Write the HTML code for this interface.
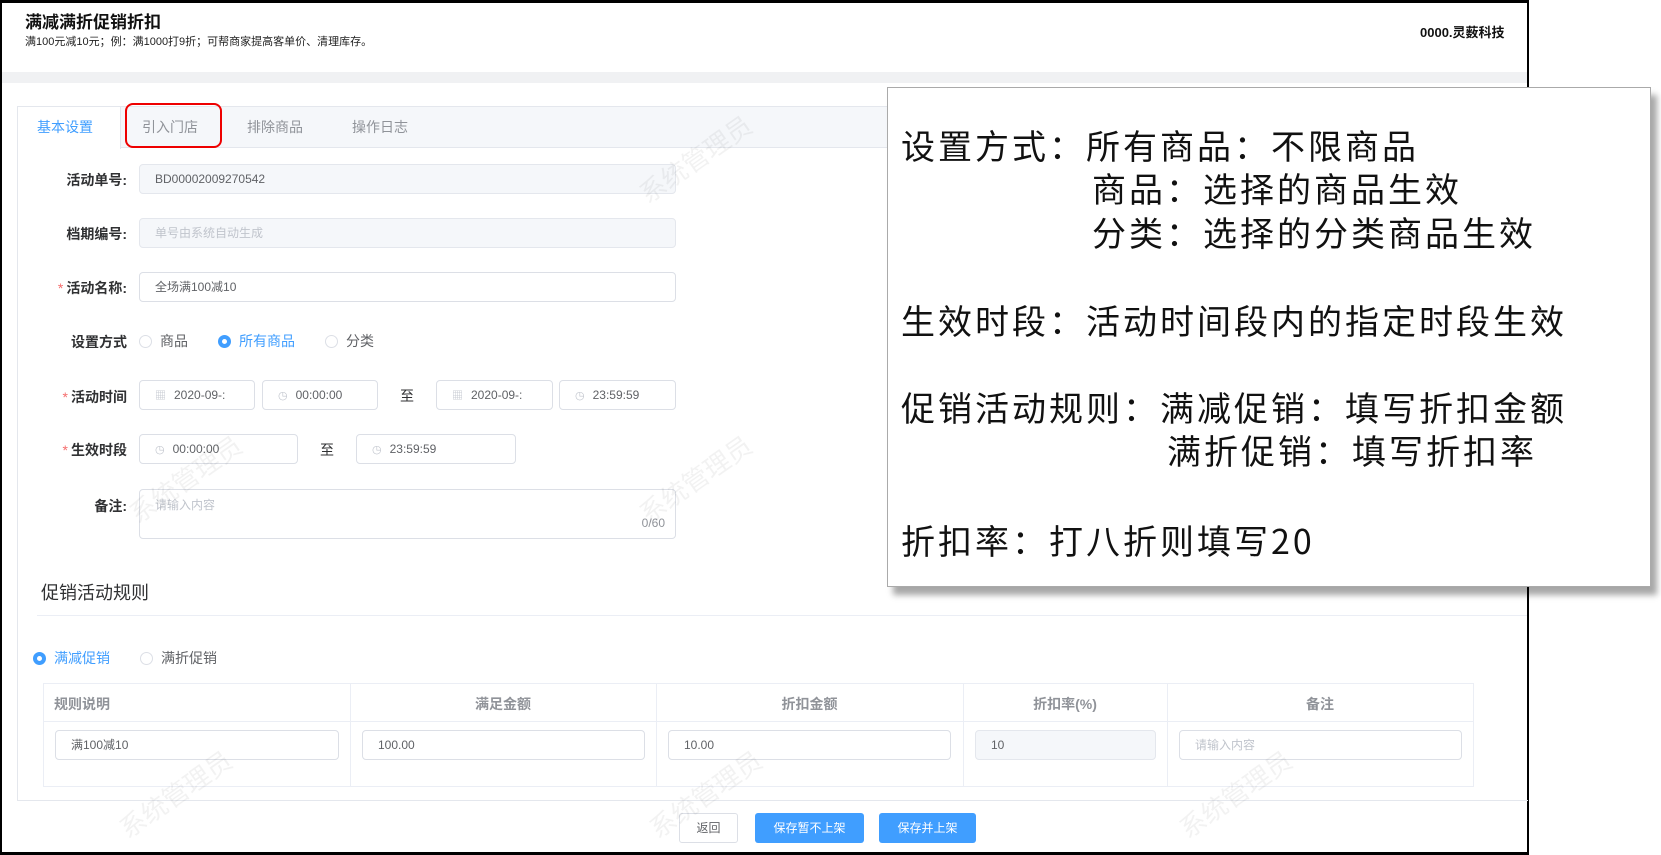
<!DOCTYPE html>
<html><head><meta charset="utf-8"><style>
*{box-sizing:border-box;margin:0;padding:0}
body{width:1661px;height:855px;background:#fff;position:relative;overflow:hidden;font-family:"Liberation Sans","Noto Sans CJK SC",sans-serif;color:#606266}
.a{position:absolute;white-space:nowrap}
.frame{position:absolute;left:0;top:0;width:1529px;height:855px;border:2px solid #000;border-top-width:3px;border-bottom-width:3px;background:#fff}
.inp{position:absolute;height:30px;border:1px solid #dcdfe6;border-radius:4px;background:#fff;font-size:12px;line-height:28px;padding-left:15px;color:#606266}
.dis{background:#f5f7fa;border-color:#e4e7ed;color:#606266}
.ph{color:#c0c4cc}
.lbl{position:absolute;font-size:14px;font-weight:bold;color:#303133;text-align:right;width:110px;left:17px}
.req{color:#f56c6c;margin-right:3px;font-weight:normal}
.radio{display:inline-block;width:13px;height:13px;border:1px solid #dcdfe6;border-radius:50%;vertical-align:-2px;margin-right:8px;background:#fff}
.radio.on{border:4px solid #409eff}
.ov{font-family:"Noto Sans CJK SC",sans-serif;font-size:34px;color:#111;position:absolute;white-space:nowrap;letter-spacing:3px;line-height:40px}
.wm{position:absolute;font-size:26px;color:rgba(0,0,0,0.05);transform:rotate(-35deg);white-space:nowrap}
.ic{color:#c0c4cc;font-size:11px;margin-right:8px}
</style></head><body>
<div class="frame"></div>
<div class="a" style="left:25px;top:8px;font-size:17px;font-weight:bold;color:#111">满减满折促销折扣</div>
<div class="a" style="left:25px;top:33px;font-size:11px;color:#222">满100元减10元；例：满1000打9折；可帮商家提高客单价、清理库存。</div>
<div class="a" style="left:1420px;top:22px;font-size:13px;font-weight:bold;color:#111">0000.灵薮科技</div>
<div class="a" style="left:2px;top:72px;width:1525px;height:11px;background:#f0f1f3"></div>

<div class="a" style="left:17px;top:106px;width:1511px;height:695px;border:1px solid #e4e7ed;border-right:none"></div>
<div class="a" style="left:18px;top:107px;width:1509px;height:41px;background:#f5f7fa;border-bottom:1px solid #e4e7ed"></div>
<div class="a" style="left:18px;top:107px;width:103px;height:42px;background:#fff;border-right:1px solid #e4e7ed"></div>
<div class="a" style="left:37px;top:117px;font-size:14px;color:#409eff">基本设置</div>
<div class="a" style="left:142px;top:117px;font-size:14px;color:#909399">引入门店</div>
<div class="a" style="left:247px;top:117px;font-size:14px;color:#909399">排除商品</div>
<div class="a" style="left:352px;top:117px;font-size:14px;color:#909399">操作日志</div>
<div class="a" style="left:125px;top:103px;width:97px;height:45px;border:2px solid #e00;border-radius:8px"></div>

<div class="lbl" style="top:170px">活动单号:</div>
<div class="inp dis" style="left:139px;top:164px;width:537px">BD00002009270542</div>
<div class="lbl" style="top:224px">档期编号:</div>
<div class="inp dis ph" style="left:139px;top:218px;width:537px">单号由系统自动生成</div>
<div class="lbl" style="top:278px"><span class="req">*</span>活动名称:</div>
<div class="inp" style="left:139px;top:272px;width:537px">全场满100减10</div>
<div class="lbl" style="top:332px">设置方式</div>
<div class="a" style="left:139px;top:331px;font-size:14px"><span class="radio"></span>商品<span style="display:inline-block;width:30px"></span><span class="radio on"></span><span style="color:#409eff">所有商品</span><span style="display:inline-block;width:30px"></span><span class="radio"></span>分类</div>
<div class="lbl" style="top:387px"><span class="req">*</span>活动时间</div>
<div class="inp" style="left:139px;top:380px;width:116px"><span class="ic">▦</span>2020-09-:</div>
<div class="inp" style="left:262px;top:380px;width:116px"><span class="ic">◷</span>00:00:00</div>
<div class="a" style="left:400px;top:386px;font-size:14px;color:#303133">至</div>
<div class="inp" style="left:436px;top:380px;width:117px"><span class="ic">▦</span>2020-09-:</div>
<div class="inp" style="left:559px;top:380px;width:117px"><span class="ic">◷</span>23:59:59</div>
<div class="lbl" style="top:440px"><span class="req">*</span>生效时段</div>
<div class="inp" style="left:139px;top:434px;width:159px"><span class="ic">◷</span>00:00:00</div>
<div class="a" style="left:320px;top:440px;font-size:14px;color:#303133">至</div>
<div class="inp" style="left:356px;top:434px;width:160px"><span class="ic">◷</span>23:59:59</div>
<div class="lbl" style="top:496px">备注:</div>
<div class="inp ph" style="left:139px;top:489px;width:537px;height:50px;line-height:30px">请输入内容<span style="position:absolute;right:10px;top:18px;color:#909399">0/60</span></div>

<div class="a" style="left:41px;top:579px;font-size:18px;color:#303133">促销活动规则</div>
<div class="a" style="left:37px;top:615px;width:1490px;height:1px;background:#ebeef5"></div>
<div class="a" style="left:33px;top:648px;font-size:14px"><span class="radio on"></span><span style="color:#409eff">满减促销</span><span style="display:inline-block;width:30px"></span><span class="radio"></span>满折促销</div>

<div class="a" style="left:43px;top:683px;width:1431px;height:104px;border:1px solid #ebeef5"></div>
<div class="a" style="left:44px;top:721px;width:1429px;height:1px;background:#ebeef5"></div>
<div class="a" style="left:350px;top:684px;width:1px;height:102px;background:#ebeef5"></div>
<div class="a" style="left:656px;top:684px;width:1px;height:102px;background:#ebeef5"></div>
<div class="a" style="left:963px;top:684px;width:1px;height:102px;background:#ebeef5"></div>
<div class="a" style="left:1167px;top:684px;width:1px;height:102px;background:#ebeef5"></div>
<div class="a" style="left:54px;top:694px;font-size:14px;font-weight:bold;color:#909399">规则说明</div>
<div class="a" style="left:350px;top:694px;width:306px;text-align:center;font-size:14px;font-weight:bold;color:#909399">满足金额</div>
<div class="a" style="left:656px;top:694px;width:307px;text-align:center;font-size:14px;font-weight:bold;color:#909399">折扣金额</div>
<div class="a" style="left:963px;top:694px;width:204px;text-align:center;font-size:14px;font-weight:bold;color:#909399">折扣率(%)</div>
<div class="a" style="left:1167px;top:694px;width:306px;text-align:center;font-size:14px;font-weight:bold;color:#909399">备注</div>
<div class="inp" style="left:55px;top:730px;width:284px">满100减10</div>
<div class="inp" style="left:362px;top:730px;width:283px">100.00</div>
<div class="inp" style="left:668px;top:730px;width:283px">10.00</div>
<div class="inp dis" style="left:975px;top:730px;width:181px">10</div>
<div class="inp ph" style="left:1179px;top:730px;width:283px">请输入内容</div>

<div class="a" style="left:679px;top:813px;width:59px;height:30px;border:1px solid #dcdfe6;border-radius:3px;font-size:12px;line-height:28px;text-align:center;color:#606266">返回</div>
<div class="a" style="left:755px;top:813px;width:109px;height:30px;background:#409eff;border-radius:3px;font-size:12px;line-height:30px;text-align:center;color:#fff">保存暂不上架</div>
<div class="a" style="left:879px;top:813px;width:97px;height:30px;background:#409eff;border-radius:3px;font-size:12px;line-height:30px;text-align:center;color:#fff">保存并上架</div>

<div class="wm" style="left:630px;top:140px">系统管理员</div>
<div class="wm" style="left:120px;top:460px">系统管理员</div>
<div class="wm" style="left:630px;top:460px">系统管理员</div>
<div class="wm" style="left:110px;top:775px">系统管理员</div>
<div class="wm" style="left:640px;top:775px">系统管理员</div>
<div class="wm" style="left:1170px;top:775px">系统管理员</div>

<div class="a" style="left:887px;top:87px;width:764px;height:500px;background:#fff;border:1px solid #aaa;box-shadow:6px 8px 6px rgba(0,0,0,0.35)"></div>
<div class="ov" style="left:901px;top:125px">设置方式：所有商品：不限商品</div>
<div class="ov" style="left:1092px;top:168px">商品：选择的商品生效</div>
<div class="ov" style="left:1092px;top:212px">分类：选择的分类商品生效</div>
<div class="ov" style="left:901px;top:300px">生效时段：活动时间段内的指定时段生效</div>
<div class="ov" style="left:901px;top:387px">促销活动规则：满减促销：填写折扣金额</div>
<div class="ov" style="left:1167px;top:430px">满折促销：填写折扣率</div>
<div class="ov" style="left:901px;top:520px">折扣率：打八折则填写20</div>
</body></html>
